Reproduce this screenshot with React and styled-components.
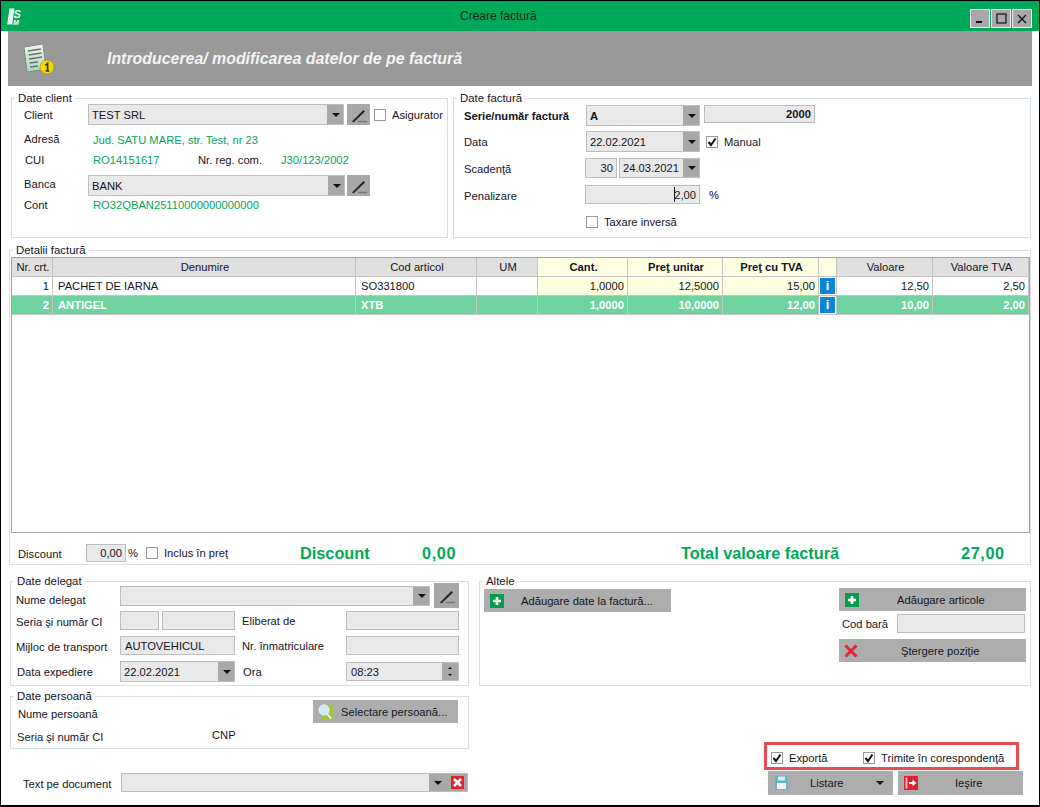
import React from "react";
import styled, { createGlobalStyle } from "styled-components";

const GlobalStyle = createGlobalStyle`
  html, body {
    margin: 0;
    padding: 0;
    background: #fff;
  }
  body {
    font-family: "Liberation Sans", Arial, sans-serif;
    font-size: 11.2px;
    color: #14141e;
  }
  * {
    box-sizing: border-box;
  }
`;

const Window = styled.div`
  width: 1040px;
  height: 807px;
  border: 1px solid #000;
  border-bottom-width: 2px;
  background: #fff;
  overflow: hidden;
`;

const TitleBar = styled.div`
  height: 30px;
  background: #00a859;
  display: flex;
  align-items: center;
  padding-left: 6px;
`;

const TitleText = styled.div`
  margin-left: 436px;
  font-size: 12px;
  color: #10261a;
`;

const WinControls = styled.div`
  margin-left: auto;
  margin-right: 7px;
  margin-top: 5px;
  display: flex;
  gap: 1px;
`;

const WinButton = styled.div`
  width: 20px;
  height: 19px;
  background: #a8a8a8;
  border: 1px solid #f2f2f2;
  display: flex;
  align-items: center;
  justify-content: center;
`;

const Banner = styled.div`
  height: 55px;
  margin: 0 7px;
  background: #999;
  display: flex;
  align-items: center;
  padding-left: 15px;
`;

const BannerTitle = styled.div`
  margin-left: 52px;
  margin-top: 1px;
  font-size: 15.9px;
  font-weight: bold;
  font-style: italic;
  color: #f4f4f4;
`;

const TopRow = styled.div`
  display: flex;
  gap: 5px;
  margin: 6px 0 0 10px;
`;

const Group = styled.fieldset`
  margin: ${(p) => p.$margin || "0"};
  padding: 0 ${(p) => p.$pr || 0}px 0 ${(p) => p.$pl || 0}px;
  width: ${(p) => p.$w}px;
  height: ${(p) => p.$h}px;
  border: 1px solid #d6e0e8;
  min-width: 0;
  legend {
    margin-left: ${(p) => 3 - (p.$pl || 0)}px;
    padding: 0 3px;
    height: 12px;
    line-height: 12px;
    font-size: 11.4px;
    color: #14141e;
  }
`;

const Row = styled.div`
  display: flex;
  align-items: center;
  height: ${(p) => p.$h}px;
  margin-top: ${(p) => p.$mt || 0}px;
  gap: ${(p) => p.$gap || 0}px;
`;

/* $dy nudges the text up or down inside its row */
const Label = styled.div`
  flex: none;
  width: ${(p) => p.$w}px;
  margin-left: ${(p) => p.$ml || 0}px;
  padding-left: ${(p) => p.$pl || 0}px;
  padding-top: ${(p) => (p.$dy > 0 ? p.$dy * 2 : 0)}px;
  padding-bottom: ${(p) => (p.$dy < 0 ? -p.$dy * 2 : 0)}px;
  font-weight: ${(p) => (p.$bold ? "bold" : "normal")};
  white-space: nowrap;
`;

const GreenValue = styled.div`
  flex: none;
  width: ${(p) => (p.$w ? p.$w + "px" : "auto")};
  padding-left: ${(p) => p.$pl || 0}px;
  color: ${(p) => p.$color || "#00a859"};
  white-space: nowrap;
`;

const ComboBox = styled.div`
  flex: none;
  width: ${(p) => p.$w}px;
  height: ${(p) => p.$h || 21}px;
  margin-left: ${(p) => p.$ml || 0}px;
  background: #e9e9e9;
  border: 1px solid #bdbdbd;
  display: flex;
  align-items: stretch;
`;

const ComboText = styled.div`
  flex: 1;
  display: flex;
  align-items: center;
  padding-left: 3px;
  font-weight: ${(p) => (p.$bold ? "bold" : "normal")};
  white-space: nowrap;
  overflow: hidden;
`;

const ComboArrow = styled.div`
  flex: none;
  width: ${(p) => p.$w || 16}px;
  background: #a8a8a8;
  display: flex;
  align-items: center;
  padding-left: 5px;
  gap: 9px;
`;

const Triangle = styled.div`
  width: 0;
  height: 0;
  border-left: 4px solid transparent;
  border-right: 4px solid transparent;
  border-top: 4px solid #111;
`;

const Input = styled.div`
  flex: none;
  width: ${(p) => p.$w}px;
  height: ${(p) => p.$h || 19}px;
  margin-left: ${(p) => p.$ml || 0}px;
  align-self: ${(p) => p.$self || "auto"};
  background: #e9e9e9;
  border: 1px solid #bdbdbd;
  display: flex;
  align-items: center;
  justify-content: ${(p) => (p.$right ? "flex-end" : "flex-start")};
  padding: 0 3px 0 4px;
  font-weight: ${(p) => (p.$bold ? "bold" : "normal")};
  white-space: nowrap;
`;

const Caret = styled.span`
  width: 1px;
  height: 15px;
  margin-right: -1px;
  background: #111;
`;

const Spinner = styled.div`
  flex: none;
  width: 16px;
  background: #a8a8a8;
  display: flex;
  flex-direction: column;
  align-items: center;
  justify-content: center;
  gap: 5px;
`;

const SpinArrow = styled.div`
  width: 0;
  height: 0;
  border-left: 2px solid transparent;
  border-right: 2px solid transparent;
  ${(p) => (p.$up ? "border-bottom: 2px solid #111;" : "border-top: 2px solid #111;")}
`;

const SpinInput = styled(Input)`
  padding-right: 0;
  align-items: stretch;
  justify-content: space-between;
  span {
    align-self: center;
  }
`;

const PencilButton = styled.div`
  flex: none;
  width: ${(p) => p.$size}px;
  height: ${(p) => p.$h}px;
  margin-left: ${(p) => p.$ml || 0}px;
  background: #a8a8a8;
  display: flex;
  align-items: center;
  justify-content: center;
`;

const CheckWrap = styled.div`
  flex: none;
  display: flex;
  align-items: center;
  gap: 6px;
  margin-left: ${(p) => p.$ml || 0}px;
  width: ${(p) => (p.$w ? p.$w + "px" : "auto")};
  white-space: nowrap;
`;

const CheckBox = styled.div`
  flex: none;
  width: 12px;
  height: 12px;
  border: 1px solid #999;
  background: #fff;
  display: flex;
  align-items: center;
  justify-content: center;
`;

const Details = styled.div`
  margin-left: 8px;
`;

const GridBox = styled.div`
  height: 276px;
  width: 1019px;
  margin-top: 1px;
  border: 1px solid #a3a3a3;
  display: grid;
  grid-template-columns: 41px 303px 121px 61px 90px 95px 96px 18px 96px 96px;
  grid-auto-rows: 19px;
  align-content: start;
`;

const Cell = styled.div`
  border-right: 1px solid #c4c4c4;
  border-bottom: 1px solid #c4c4c4;
  background: ${(p) => p.$bg || "#fff"};
  color: ${(p) => p.$color || "#14141e"};
  font-weight: ${(p) => (p.$bold ? "bold" : "normal")};
  display: flex;
  align-items: center;
  justify-content: ${(p) => (p.$align === "right" ? "flex-end" : p.$align === "center" ? "center" : "flex-start")};
  padding: 0 3px 0 5px;
  white-space: nowrap;
  overflow: hidden;
`;

const InfoIcon = styled.div`
  width: 15px;
  height: 16px;
  background: #0a86d8;
  color: #fff;
  font-weight: bold;
  font-size: 13px;
  line-height: 16px;
  text-align: center;
`;

const InfoCell = styled(Cell)`
  padding: 0 0 0 1px;
`;

const TotalsRow = styled.div`
  display: flex;
  align-items: center;
  height: 18px;
  margin: 11px 0 0 7px;
`;

const TotalText = styled.div`
  flex: none;
  width: ${(p) => (p.$w ? p.$w + "px" : "auto")};
  padding-top: 1px;
  font-size: 16.3px;
  font-weight: bold;
  letter-spacing: ${(p) => (p.$num ? "0.6px" : "0")};
  color: #00a859;
  white-space: nowrap;
`;

const BottomRow = styled.div`
  display: flex;
  gap: 10px;
  margin: 10px 0 0 9px;
`;

const LeftCol = styled.div`
  width: 459px;
  flex: none;
`;

const RightCol = styled.div`
  width: 552px;
  flex: none;
`;

const AltelePanel = styled.div`
  display: flex;
  justify-content: space-between;
`;

const Stack = styled.div`
  margin-top: ${(p) => p.$mt || 0}px;
  width: ${(p) => (p.$w ? p.$w + "px" : "auto")};
`;

const ActionButton = styled.div`
  flex: none;
  width: ${(p) => p.$w}px;
  height: ${(p) => p.$h || 23}px;
  margin-top: ${(p) => p.$mt || 0}px;
  background: #adadad;
  display: flex;
  align-items: center;
  padding-left: ${(p) => p.$pl || 6}px;
  white-space: nowrap;
`;

const ButtonText = styled.span`
  margin-left: ${(p) => p.$ml}px;
`;

const ButtonArrow = styled(Triangle)`
  margin-left: auto;
  margin-right: 9px;
`;

const DocRow = styled(Row)`
  margin-left: 13px;
`;

const HighlightBox = styled.div`
  width: 255px;
  height: 28px;
  margin: 56px 0 0 285px;
  border: 3px solid #e84c4c;
  display: flex;
  align-items: center;
  padding: 3px 0 0 4px;
`;

const ExitRow = styled.div`
  display: flex;
  gap: 5px;
  margin: 1px 0 0 289px;
`;

const Pencil = () => (
  <svg width="18" height="16" viewBox="0 0 18 16">
    <path d="M2 14.5 L13.5 3 L15 4.5 L3.5 15.5 Z" fill="#222" />
    <path d="M8 14.5 H17" stroke="#777" strokeWidth="1.5" />
  </svg>
);

const Check = () => (
  <svg width="10" height="10" viewBox="0 0 10 10">
    <path d="M1.5 5 L4 8 L8.5 1.5" fill="none" stroke="#111" strokeWidth="2" />
  </svg>
);

const Checkbox = ({ checked }) => <CheckBox>{checked && <Check />}</CheckBox>;

const Combo = ({ w, h, bold, text, ml }) => (
  <ComboBox $w={w} $h={h} $ml={ml}>
    <ComboText $bold={bold}>{text}</ComboText>
    <ComboArrow>
      <Triangle />
    </ComboArrow>
  </ComboBox>
);

const Logo = () => (
  <svg width="17" height="17" viewBox="0 0 17 17">
    <rect x="0.5" y="0.5" width="5" height="16" fill="#e8f6ee" transform="skewX(-8) translate(2 0)" />
    <text x="6.5" y="10" fontFamily="Liberation Sans" fontWeight="bold" fontStyle="italic" fontSize="11" fill="#fff">S</text>
    <text x="6" y="16.5" fontFamily="Liberation Sans" fontWeight="bold" fontStyle="italic" fontSize="7" fill="#fff">M</text>
  </svg>
);

const DocIcon = () => (
  <svg width="32" height="32" viewBox="0 0 32 32">
    <defs>
      <linearGradient id="paper" x1="0" y1="0" x2="0" y2="1">
        <stop offset="0" stopColor="#f1f3f0" />
        <stop offset="1" stopColor="#a9d9bb" />
      </linearGradient>
    </defs>
    <path d="M1 4 L20 1 L23 26 L4 29 Z" fill="url(#paper)" stroke="#7f8a83" />
    <path d="M5 8 L18 6 M5.6 12 L18.6 10 M6 16 L19 14 M6.6 20 L15 19 M7 24 L15 23" stroke="#66736b" strokeWidth="1.3" />
    <circle cx="24" cy="24" r="7" fill="#f5d90a" stroke="#8f8a1a" strokeWidth="0.6" />
    <path d="M22.3 22.3 L24.6 20.4 V28 M22.5 28 H26.5" stroke="#3b3a10" strokeWidth="1.7" fill="none" />
  </svg>
);

const PlusIcon = () => (
  <svg width="14" height="14" viewBox="0 0 14 14">
    <rect width="14" height="14" fill="#079b4d" />
    <path d="M7 3 V11 M3 7 H11" stroke="#fff" strokeWidth="2.6" />
  </svg>
);

const CrossIcon = () => (
  <svg width="14" height="14" viewBox="0 0 14 14">
    <path d="M1.5 1.5 L12.5 12.5 M12.5 1.5 L1.5 12.5" stroke="#e32434" strokeWidth="3" />
  </svg>
);

const SearchIcon = () => (
  <svg width="15" height="16" viewBox="0 0 15 16">
    <rect x="3" y="1" width="12" height="14" fill="#a2c53f" />
    <circle cx="6" cy="6" r="5" fill="#cfeafb" stroke="#eaf6fd" />
    <path d="M9 9.5 L13 14.5" stroke="#f2f2f2" strokeWidth="2" />
  </svg>
);

const SaveIcon = () => (
  <svg width="13" height="14" viewBox="0 0 13 14">
    <rect width="13" height="14" fill="#5ab9cc" />
    <rect x="3" y="0.5" width="7" height="4" fill="#dfe9ec" />
    <rect x="2" y="7" width="9" height="6" fill="#f3f5f5" />
  </svg>
);

const ExitIcon = () => (
  <svg width="14" height="14" viewBox="0 0 14 14">
    <rect width="14" height="14" fill="#e01f30" />
    <rect x="1.5" y="1.5" width="2" height="11" fill="#f4b6bc" />
    <path d="M5 6 H8.5 V3.8 L12.5 7 L8.5 10.2 V8 H5 Z" fill="#fff" />
  </svg>
);

const ClearIcon = () => (
  <svg width="13" height="13" viewBox="0 0 13 13">
    <rect width="13" height="13" fill="#e4202f" />
    <path d="M3 3 L10 10 M10 3 L3 10" stroke="#fff" strokeWidth="2.6" />
  </svg>
);

const columns = [
  { title: "Nr. crt.", align: "right" },
  { title: "Denumire" },
  { title: "Cod articol" },
  { title: "UM" },
  { title: "Cant.", align: "right", yellow: true },
  { title: "Preţ unitar", align: "right", yellow: true },
  { title: "Preţ cu TVA", align: "right", yellow: true },
  { title: "", yellow: true, info: true },
  { title: "Valoare", align: "right" },
  { title: "Valoare TVA", align: "right" },
];

const rows = [
  ["1", "PACHET DE IARNA", "SO331800", "", "1,0000", "12,5000", "15,00", "", "12,50", "2,50"],
  ["2", "ANTIGEL", "XTB", "", "1,0000", "10,0000", "12,00", "", "10,00", "2,00"],
];

export default function App() {
  return (
    <Window>
      <GlobalStyle />
      <TitleBar>
        <Logo />
        <TitleText>Creare factură</TitleText>
        <WinControls>
          <WinButton>
            <svg width="10" height="10" viewBox="0 0 10 10">
              <rect x="1" y="7" width="6" height="2" fill="#111" />
            </svg>
          </WinButton>
          <WinButton>
            <svg width="11" height="11" viewBox="0 0 11 11">
              <rect x="1" y="1" width="9" height="9" fill="none" stroke="#111" strokeWidth="1.2" />
            </svg>
          </WinButton>
          <WinButton>
            <svg width="10" height="10" viewBox="0 0 10 10">
              <path d="M1 1 L9 9 M9 1 L1 9" stroke="#111" strokeWidth="1.4" />
            </svg>
          </WinButton>
        </WinControls>
      </TitleBar>

      <Banner>
        <DocIcon />
        <BannerTitle>Introducerea/ modificarea datelor de pe factură</BannerTitle>
      </Banner>

      <TopRow>
        <Group $w={437} $h={146} $pl={12}>
          <legend>Date client</legend>
          <Row $h={21}>
            <Label $w={64}>Client</Label>
            <Combo w={256} text="TEST SRL" />
            <PencilButton $size={23} $h={21} $ml={3}>
              <Pencil />
            </PencilButton>
            <CheckWrap $ml={4}>
              <Checkbox />
              Asigurator
            </CheckWrap>
          </Row>
          <Row $h={20} $mt={5}>
            <Label $w={64} $dy={-1}>Adresă</Label>
            <GreenValue $pl={5}>Jud. SATU MARE, str. Test, nr 23</GreenValue>
          </Row>
          <Row $h={20}>
            <Label $w={64} $pl={1}>CUI</Label>
            <GreenValue $w={110} $pl={5}>RO14151617</GreenValue>
            <Label $w={83}>Nr. reg. com.</Label>
            <GreenValue>J30/123/2002</GreenValue>
          </Row>
          <Row $h={21} $mt={5}>
            <Label $w={64} $dy={-2}>Banca</Label>
            <Combo w={257} text="BANK" />
            <PencilButton $size={23} $h={21} $ml={2}>
              <Pencil />
            </PencilButton>
          </Row>
          <Row $h={18}>
            <Label $w={64}>Cont</Label>
            <GreenValue $pl={5}>RO32QBAN25110000000000000</GreenValue>
          </Row>
        </Group>

        <Group $w={578} $h={146} $pl={10}>
          <legend>Date factură</legend>
          <Row $h={21} $mt={1}>
            <Label $w={122} $bold>Serie/număr factură</Label>
            <Combo w={114} bold text="A" />
            <Input $w={111} $h={18} $ml={4} $self="flex-start" $right $bold>2000</Input>
          </Row>
          <Row $h={21} $mt={5}>
            <Label $w={122}>Data</Label>
            <Combo w={114} text="22.02.2021" />
            <CheckWrap $ml={6}>
              <Checkbox checked />
              Manual
            </CheckWrap>
          </Row>
          <Row $h={20} $mt={6}>
            <Label $w={121} $dy={1}>Scadenţă</Label>
            <Input $w={32} $h={20} $right>30</Input>
            <Combo w={81} h={20} ml={2} text="24.03.2021" />
          </Row>
          <Row $h={19} $mt={7}>
            <Label $w={121} $dy={1}>Penalizare</Label>
            <Input $w={115} $right>
              <Caret />
              2,00
            </Input>
            <Label $w={20} $ml={9}>%</Label>
          </Row>
          <Row $h={14} $mt={11}>
            <CheckWrap $ml={122}>
              <Checkbox />
              Taxare inversă
            </CheckWrap>
          </Row>
        </Group>
      </TopRow>

      <Details>
        <Group $w={1022} $h={321} $pl={1} $margin="6px 0 0 0">
          <legend>Detalii factură</legend>
          <GridBox>
            {columns.map((col, i) => (
              <Cell
                key={i}
                $align="center"
                $bg={col.yellow ? "#fefee0" : "#e0e0e0"}
                $bold={col.yellow}
              >
                {col.title}
              </Cell>
            ))}
            {rows.map((row, r) =>
              row.map((value, c) => {
                const col = columns[c];
                if (col.info) {
                  return (
                    <InfoCell key={r + "-" + c}>
                      <InfoIcon>i</InfoIcon>
                    </InfoCell>
                  );
                }
                return (
                  <Cell
                    key={r + "-" + c}
                    $align={col.align}
                    $bg={r === 1 ? "#6fd39f" : col.yellow ? "#fefee0" : "#fff"}
                    $color={r === 1 ? "#fff" : undefined}
                    $bold={r === 1}
                  >
                    {value}
                  </Cell>
                );
              })
            )}
          </GridBox>
          <TotalsRow>
            <Label $w={68} $dy={1}>Discount</Label>
            <Input $w={40} $h={18} $right>0,00</Input>
            <Label $w={18} $ml={2}>%</Label>
            <CheckWrap $w={154}>
              <Checkbox />
              Inclus în preţ
            </CheckWrap>
            <TotalText $w={122}>Discount</TotalText>
            <TotalText $w={259} $num>0,00</TotalText>
            <TotalText $w={280}>Total valoare factură</TotalText>
            <TotalText $num>27,00</TotalText>
          </TotalsRow>
        </Group>
      </Details>

      <BottomRow>
        <LeftCol>
          <Group $w={459} $h={111} $pl={5}>
            <legend>Date delegat</legend>
            <Row $h={25} $mt={-4}>
              <Label $w={104} $dy={4}>Nume delegat</Label>
              <ComboBox $w={310} $h={20}>
                <ComboText />
                <ComboArrow><Triangle /></ComboArrow>
              </ComboBox>
              <PencilButton $size={25} $h={25} $ml={4}>
                <Pencil />
              </PencilButton>
            </Row>
            <Row $h={19} $mt={3}>
              <Label $w={104} $dy={1}>Seria şi număr CI</Label>
              <Input $w={39} />
              <Input $w={73} $ml={3} />
              <Label $w={104} $ml={7}>Eliberat de</Label>
              <Input $w={113} />
            </Row>
            <Row $h={19} $mt={6}>
              <Label $w={104} $dy={1}>Mijloc de transport</Label>
              <Input $w={115}>AUTOVEHICUL</Input>
              <Label $w={104} $ml={7}>Nr. înmatriculare</Label>
              <Input $w={113} />
            </Row>
            <Row $h={21} $mt={6}>
              <Label $w={104} $pl={1}>Data expediere</Label>
              <Combo w={115} text="22.02.2021" />
              <Label $w={104} $ml={7} $pl={1}>Ora</Label>
              <SpinInput $w={113}>
                <span>08:23</span>
                <Spinner>
                  <SpinArrow $up />
                  <SpinArrow />
                </Spinner>
              </SpinInput>
            </Row>
          </Group>

          <Group $w={459} $h={59} $pl={5} $margin="4px 0 0 0">
            <legend>Date persoană</legend>
            <Row $h={23} $mt={-2}>
              <Label $w={297} $pl={2} $dy={2}>Nume persoană</Label>
              <ActionButton $w={145} $pl={5}>
                <SearchIcon />
                <ButtonText $ml={8}>Selectare persoană...</ButtonText>
              </ActionButton>
            </Row>
            <Row $h={20} $mt={2}>
              <Label $w={196} $pl={1} $dy={2}>Seria şi număr CI</Label>
              <Label $w={40}>CNP</Label>
            </Row>
          </Group>

          <DocRow $h={19} $mt={24}>
            <Label $w={98} $dy={1}>Text pe document</Label>
            <ComboBox $w={347} $h={19}>
              <ComboText />
              <ComboArrow $w={38}>
                <Triangle />
                <ClearIcon />
              </ComboArrow>
            </ComboBox>
          </DocRow>
        </LeftCol>

        <RightCol>
          <Group $w={552} $h={111} $pl={4} $pr={4}>
            <legend>Altele</legend>
            <AltelePanel>
              <ActionButton $w={187} $mt={2}>
                <PlusIcon />
                <ButtonText $ml={17}>Adăugare date la factură...</ButtonText>
              </ActionButton>
              <Stack $mt={1} $w={187}>
                <ActionButton $w={187}>
                  <PlusIcon />
                  <ButtonText $ml={38}>Adăugare articole</ButtonText>
                </ActionButton>
                <Row $h={19} $mt={3}>
                  <Label $w={58} $pl={3}>Cod bară</Label>
                  <Input $w={128} />
                </Row>
                <ActionButton $w={187} $mt={6} $pl={5}>
                  <CrossIcon />
                  <ButtonText $ml={43}>Ştergere poziţie</ButtonText>
                </ActionButton>
              </Stack>
            </AltelePanel>
          </Group>

          <HighlightBox>
            <CheckWrap $w={92}>
              <Checkbox checked />
              Exportă
            </CheckWrap>
            <CheckWrap>
              <Checkbox checked />
              Trimite în corespondenţă
            </CheckWrap>
          </HighlightBox>

          <ExitRow>
            <ActionButton $w={125} $h={24} $pl={7}>
              <SaveIcon />
              <ButtonText $ml={22}>Listare</ButtonText>
              <ButtonArrow />
            </ActionButton>
            <ActionButton $w={125} $h={24}>
              <ExitIcon />
              <ButtonText $ml={37}>Ieşire</ButtonText>
            </ActionButton>
          </ExitRow>
        </RightCol>
      </BottomRow>
    </Window>
  );
}
